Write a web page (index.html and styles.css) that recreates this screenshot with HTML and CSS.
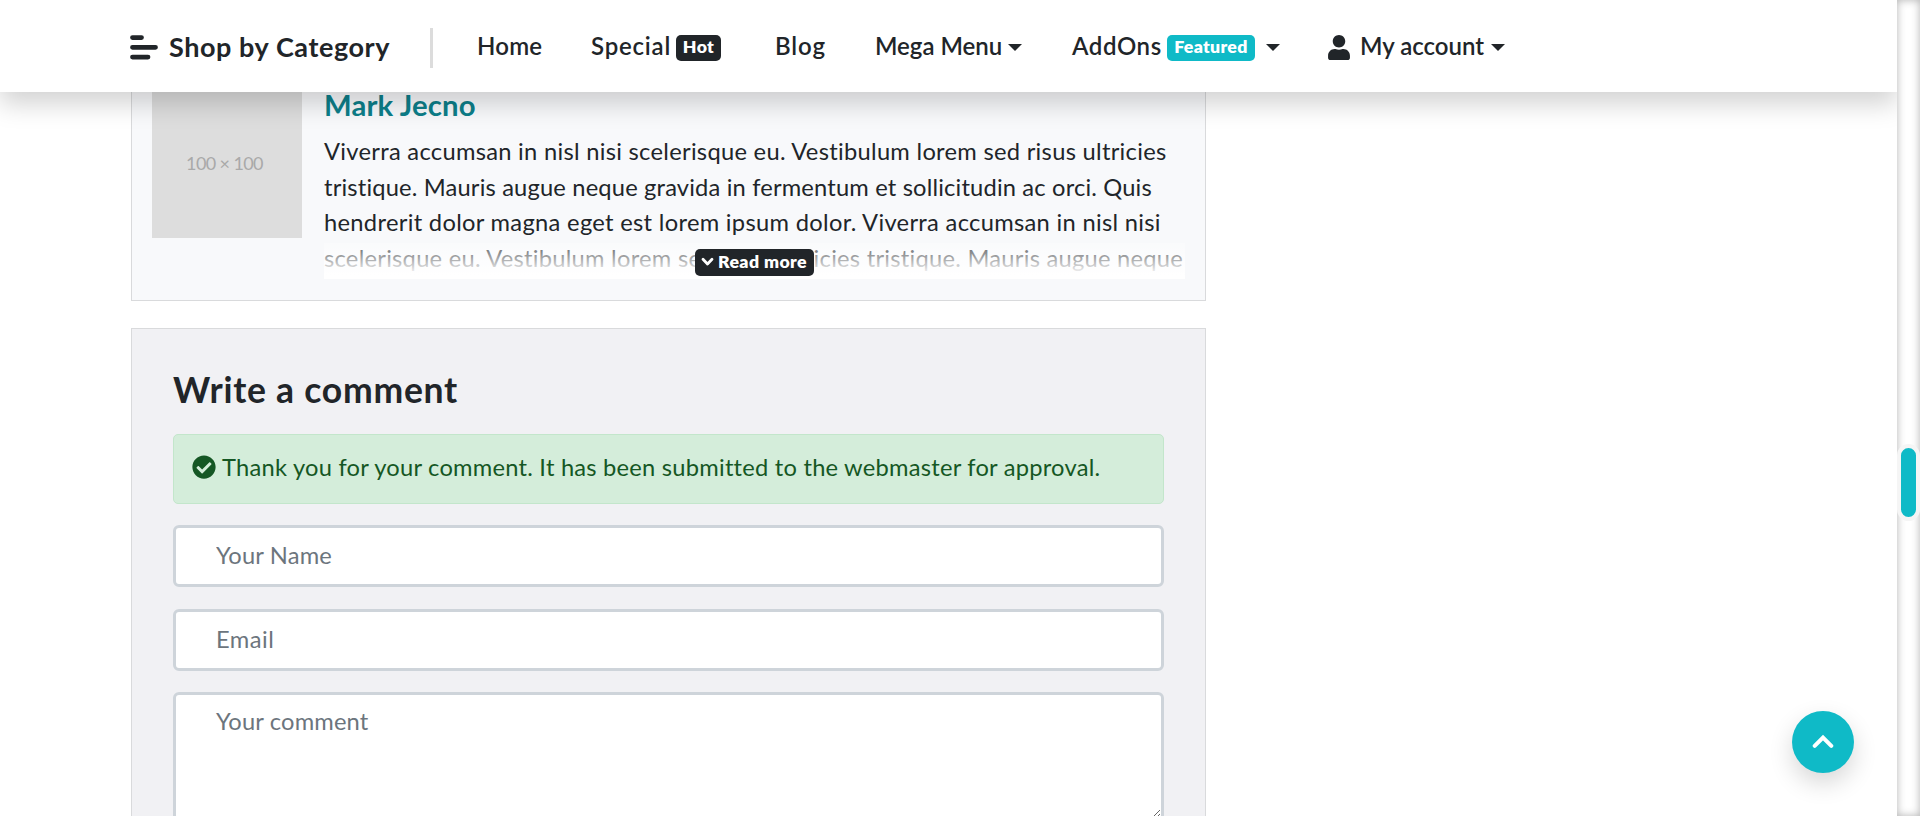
FILE: index.html
```
<!DOCTYPE html>
<html lang="en">
<head>
<meta charset="utf-8">
<title>Write a comment</title>
<link rel="stylesheet" href="styles.css">
</head>
<body>
<div class="page">
  <header class="topbar">
    <a class="category">
      <svg class="bars" width="28" height="26" viewBox="0 0 28 26"><path d="M2.500 2.600h9M2.500 12.300h23M2.500 22.100h15.500" stroke="#212529" stroke-width="4.800" stroke-linecap="round"/></svg>
      <span class="category-label">Shop by Category</span>
    </a>
    <span class="divider"></span>
    <nav class="nav">
      <a class="item"><span class="t-home">Home</span></a>
      <a class="item"><span class="t-special">Special</span><span class="badge hot">Hot</span></a>
      <a class="item"><span class="t-blog">Blog</span></a>
      <a class="item"><span class="t-mega">Mega Menu</span><i class="caret"></i></a>
      <a class="item"><span class="t-addons">AddOns</span><span class="badge featured">Featured</span><i class="caret wide"></i></a>
      <a class="item">
        <svg class="user" width="22" height="25" viewBox="0 0 448 512"><path fill="#212529" d="M224 256c70.700 0 128-57.300 128-128S294.700 0 224 0 96 57.300 96 128s57.300 128 128 128zm89.600 32h-16.700c-22.200 10.200-46.900 16-72.900 16s-50.600-5.800-72.900-16h-16.700C60.200 288 0 348.200 0 422.400V464c0 26.500 21.500 48 48 48h352c26.500 0 48-21.500 48-48v-41.600c0-74.200-60.200-134.400-134.400-134.400z"/></svg>
        <span class="t-account">My account</span><i class="caret"></i>
      </a>
    </nav>
  </header>
  <main class="content">
    <article class="comment">
      <div class="avatar"><span>100 × 100</span></div>
      <div class="comment-body">
        <h3 class="author">Mark Jecno</h3>
        <div class="excerpt">
          <div class="line l1">Viverra accumsan in nisl nisi scelerisque eu. Vestibulum lorem sed risus ultricies</div>
          <div class="line l2">tristique. Mauris augue neque gravida in fermentum et sollicitudin ac orci. Quis</div>
          <div class="line l3">hendrerit dolor magna eget est lorem ipsum dolor. Viverra accumsan in nisl nisi</div>
          <div class="line l4">scelerisque eu. Vestibulum lorem sed risus ultricies tristique. Mauris augue neque</div>
          <div class="fade"></div>
          <a class="more"><svg width="13" height="10" viewBox="0 0 13 10"><path d="M2 2.300l4.500 4.700L11 2.300" fill="none" stroke="#fff" stroke-width="2.800" stroke-linecap="round" stroke-linejoin="round"/></svg><span>Read more</span></a>
        </div>
      </div>
    </article>
    <section class="write">
      <h2 class="write-title">Write a comment</h2>
      <div class="alert">
        <svg width="24" height="24" viewBox="0 0 512 512"><path fill="#155724" d="M504 256c0 136.967-111.033 248-248 248S8 392.967 8 256 119.033 8 256 8s248 111.033 248 248zM227.314 387.314l184-184c6.248-6.248 6.248-16.379 0-22.627l-22.627-22.627c-6.248-6.249-16.379-6.249-22.628 0L216 308.118l-70.059-70.059c-6.248-6.248-16.379-6.248-22.628 0l-22.627 22.627c-6.248 6.248-6.248 16.379 0 22.627l104 104c6.249 6.249 16.379 6.249 22.628.001z"/></svg>
        <span class="alert-text">Thank you for your comment. It has been submitted to the webmaster for approval.</span>
      </div>
      <input class="field" type="text" placeholder="Your Name">
      <input class="field email" type="email" placeholder="Email">
      <textarea class="field area" placeholder="Your comment"></textarea>
    </section>
  </main>
  <a class="to-top"><svg width="22" height="15" viewBox="0 0 22 15"><path d="M2.700 11.800L11 3.500l8.300 8.300" fill="none" stroke="#fff" stroke-width="4" stroke-linecap="round"/></svg></a>
</div>
<div class="track"><div class="thumb"></div></div>
</body>
</html>
```
FILE: styles.css
```
* { box-sizing: border-box; }
body {
  margin: 0;
  height: 816px;
  overflow: hidden;
  display: grid;
  grid-template-columns: 1897px 23px;
  font-family: Lato, "Open Sans", sans-serif;
  font-size: 23.7px;
  color: #212529;
  background: #fff;
}
.page { position: relative; height: 816px; overflow: hidden; }

.topbar {
  position: relative;
  z-index: 2;
  display: flex;
  height: 92px;
  padding-left: 130px;
  background: #fff;
  box-shadow: 0 12px 24px rgba(0, 0, 0, .175);
  font-weight: 600;
  white-space: nowrap;
}
.category { display: flex; width: 300px; padding-top: 35px; }
.category-label {
  margin: -4px 0 0 11px;
  font-size: 27px;
  font-weight: 700;
  line-height: 32px;
  letter-spacing: .57px;
}
.divider { width: 3px; height: 40px; margin-top: 28px; background: #dcdcdc; }
.nav {
  display: grid;
  grid-template-columns: 114px 184px 100px 197px 256px auto;
  margin-left: 44px;
  padding-top: 31px;
  font-size: 24px;
  line-height: 30px;
}
.item { display: flex; align-items: flex-start; }
.t-home { letter-spacing: .2px; }
.t-special { width: 85px; letter-spacing: .8px; }
.t-blog { letter-spacing: .9px; }
.t-mega { width: 133px; }
.t-addons { width: 95px; letter-spacing: .6px; }
.t-account { width: 131px; margin-left: 10px; }
.badge {
  height: 26px;
  margin-top: 4px;
  border-radius: 5px;
  color: #fff;
  font-size: 17.7px;
  font-weight: 800;
  line-height: 24px;
  text-align: center;
  letter-spacing: .3px;
}
.hot { width: 45px; background: #212529; }
.featured { width: 88px; background: #0fbac7; }
.caret {
  margin-top: 13px;
  border: 7px solid transparent;
  border-top-color: #212529;
  border-bottom: 0;
}
.caret.wide { margin-left: 11px; }
.user { margin-top: 4px; }

.content { width: 1075px; margin-left: 131px; }
.comment {
  display: flex;
  height: 209px;
  padding-left: 20px;
  border: 1px solid #d9dadc;
  border-top: 0;
  background: #f8f9fb;
}
.avatar {
  display: flex;
  justify-content: center;
  width: 150px;
  height: 146px;
  padding: 60px 5px 0 0;
  background: #ddd;
  color: #a9a9a9;
  font-size: 18px;
  line-height: 22px;
  letter-spacing: -.6px;
}
.comment-body { width: 861px; margin-left: 22px; }
.author {
  margin: 0;
  height: 42px;
  color: #0d7f8a;
  font-size: 29.3px;
  font-weight: 700;
  line-height: 25px;
  letter-spacing: .15px;
}
.excerpt { position: relative; height: 145px; line-height: 35.55px; white-space: nowrap; }
.l1 { letter-spacing: .29px; }
.l2 { letter-spacing: .17px; }
.l3 { letter-spacing: .31px; }
.l4 { letter-spacing: .26px; }
.fade {
  position: absolute;
  left: 0;
  right: 0;
  bottom: 0;
  height: 36px;
  background: linear-gradient(rgba(255, 255, 255, .25), #fff 90%);
}
.more {
  position: absolute;
  left: 371px;
  top: 115px;
  display: flex;
  align-items: center;
  width: 119px;
  height: 27px;
  padding-left: 6px;
  gap: 4px;
  border-radius: 5px;
  background: #212529;
  color: #fff;
  font-size: 17.7px;
  font-weight: 800;
  line-height: 22px;
  letter-spacing: .4px;
}
.more svg { margin-top: -2px; }
.more span { padding-bottom: 1px; }

.write {
  display: flex;
  flex-direction: column;
  height: 560px;
  margin-top: 27px;
  padding: 0 41px;
  border: 1px solid #d9dadc;
  background: #f1f1f4;
}
.write-title {
  margin: 0;
  padding-top: 39px;
  height: 105px;
  font-size: 35.5px;
  font-weight: 700;
  line-height: 43px;
  letter-spacing: .75px;
}
.alert {
  display: flex;
  height: 70px;
  padding: 20px 0 0 18px;
  border: 1px solid #c3e6cb;
  border-radius: 5px;
  background: #d4edda;
  color: #155724;
  white-space: nowrap;
}
.alert-text { margin-left: 6px; line-height: 25px; letter-spacing: .23px; }
.field {
  flex: none;
  height: 62px;
  margin: 21px 0 0;
  padding: 0 40px 2px;
  border: 3px solid #ced4da;
  border-radius: 6px;
  background: #fff;
  font: inherit;
  letter-spacing: .16px;
  outline: 0;
}
.field::placeholder { color: #6c757d; opacity: 1; }
.email { margin-top: 22px; letter-spacing: .5px; }
.area { height: 129px; padding-top: 9px; line-height: 35.55px; resize: vertical; }

.to-top {
  position: absolute;
  right: 43px;
  bottom: 43px;
  display: flex;
  align-items: center;
  justify-content: center;
  width: 62px;
  height: 62px;
  border-radius: 50%;
  background: #0fbac7;
  box-shadow: 0 10px 24px rgba(0, 0, 0, .16);
}
.to-top svg { margin-top: -2px; }

.track {
  height: 816px;
  padding-top: 444px;
  background: #fff;
  box-shadow: inset 0 0 9px rgba(0, 0, 0, .3);
}
.thumb {
  height: 77px;
  border: 4px solid #f5f5f5;
  border-radius: 12px;
  background: #0fbac7;
}
```
